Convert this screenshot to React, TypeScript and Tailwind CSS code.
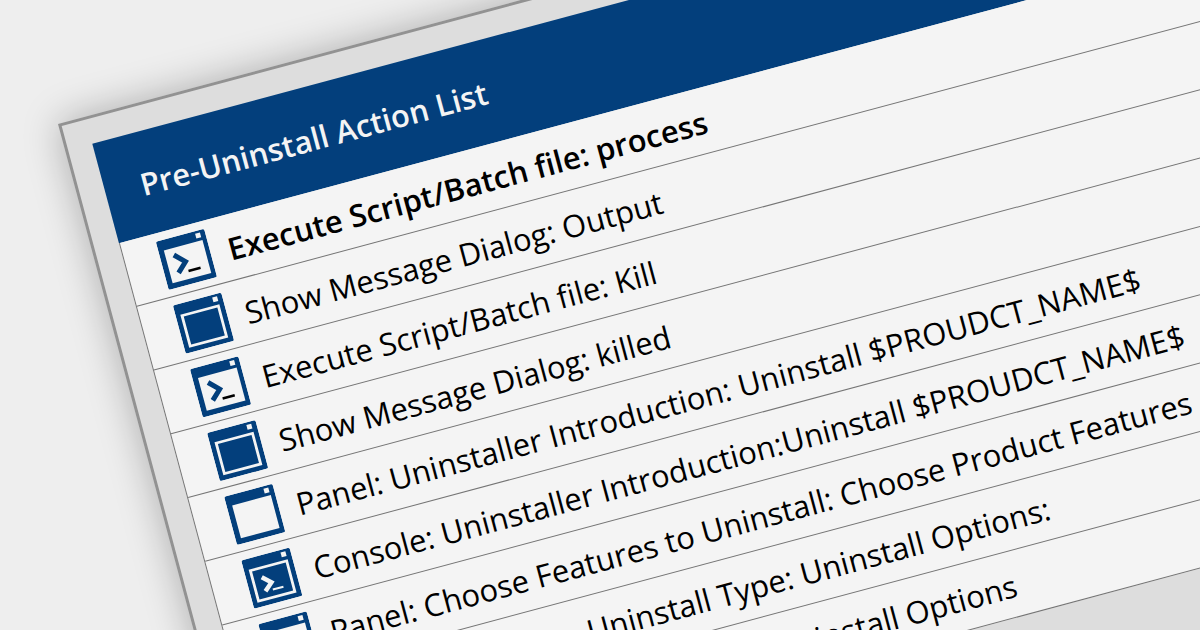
type IconKind = "script" | "message" | "panel" | "console";

type Action = {
  kind: IconKind;
  label: string;
  active?: boolean;
};

const actions: Action[] = [
  { kind: "script", label: "Execute Script/Batch file: process", active: true },
  { kind: "message", label: "Show Message Dialog: Output" },
  { kind: "script", label: "Execute Script/Batch file: Kill" },
  { kind: "message", label: "Show Message Dialog: killed" },
  { kind: "panel", label: "Panel: Uninstaller Introduction: Uninstall $PROUDCT_NAME$" },
  { kind: "console", label: "Console: Uninstaller Introduction:Uninstall $PROUDCT_NAME$" },
  { kind: "panel", label: "Panel: Choose Features to Uninstall: Choose Product Features" },
  { kind: "console", label: "Console: Choose Uninstall Type: Uninstall Options:" },
  { kind: "panel", label: "Panel: Choose Uninstall Type:Uninstall Options" },
];

function ActionIcon({ kind }: { kind: IconKind }) {
  return (
    <svg viewBox="0 0 50 50" className="size-[50px] shrink-0" aria-hidden="true">
      <rect width="50" height="50" rx="2" fill="#033f7c" />
      <rect x="40" y="2.5" width="5" height="5" fill="#f4f4f4" />
      {(kind === "script" || kind === "panel") && (
        <rect x="5.5" y="10.5" width="40" height="34" fill="#f4f4f4" />
      )}
      {(kind === "message" || kind === "console") && (
        <rect x="6.2" y="12.2" width="37.6" height="31.6" fill="none" stroke="#f4f4f4" strokeWidth="2.8" />
      )}
      {kind === "script" && (
        <>
          <path d="M14 17.5 L23.5 27 L14 36" fill="none" stroke="#033f7c" strokeWidth="5" />
          <rect x="24" y="35.5" width="12.5" height="2.5" fill="#000" />
        </>
      )}
      {kind === "console" && (
        <>
          <path d="M15.5 21.5 L23.5 29 L15.5 36" fill="none" stroke="#f4f4f4" strokeWidth="4.5" />
          <rect x="23" y="35.3" width="11" height="2" fill="#f4f4f4" />
        </>
      )}
    </svg>
  );
}

export default function App() {
  return (
    <main className="flex h-screen items-start overflow-hidden bg-[#eeeeee] pt-[124px] pl-[58px] font-['Open_Sans',sans-serif]">
      <section className="w-[120vw] shrink-0 origin-top-left -rotate-15 border-3 border-[#929292] bg-[#dddddd] p-[25px] pb-40 shadow-[0_0_38px_rgba(0,0,0,0.28)]">
        <h1 className="flex h-[103px] items-center bg-[#033f7c] px-[36px] pt-0.5 text-[31px] font-semibold text-[#f4f4f4]">
          Pre-Uninstall Action List
        </h1>
        <ul className="border-l border-[#757575] bg-[#f4f4f4]">
          {actions.map((action) => (
            <li
              key={action.label}
              className="flex h-[66px] items-center gap-[18px] border-b border-[#757575] px-[35px] text-[31px] whitespace-nowrap text-black"
            >
              <ActionIcon kind={action.kind} />
              <span className={action.active ? "pt-1 font-semibold" : "pt-1"}>{action.label}</span>
            </li>
          ))}
        </ul>
      </section>
    </main>
  );
}
